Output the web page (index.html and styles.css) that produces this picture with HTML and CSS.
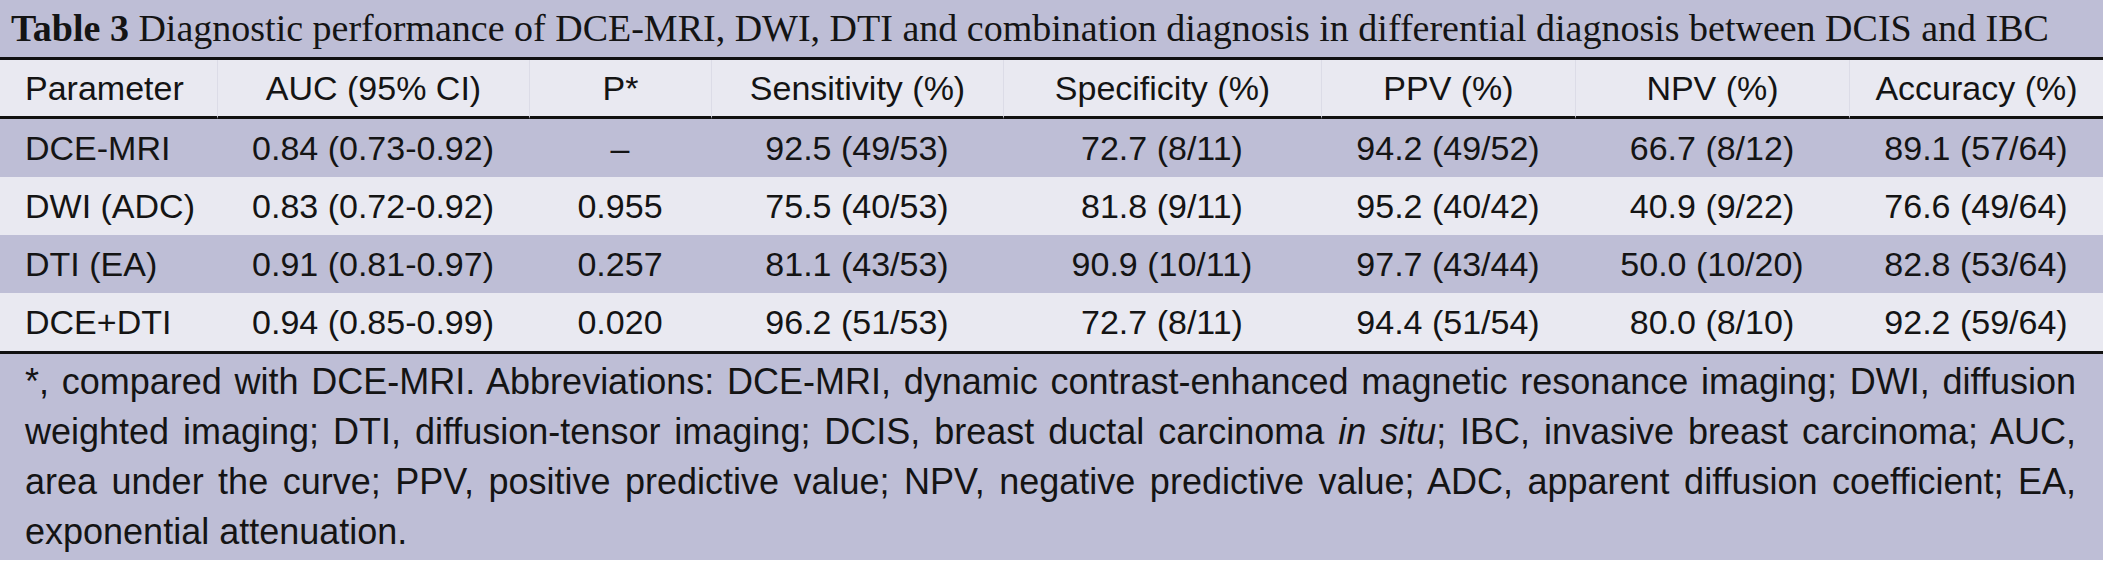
FILE: index.html
```html
<!DOCTYPE html>
<html>
<head>
<meta charset="utf-8">
<link rel="stylesheet" href="styles.css">
</head>
<body>
<div class="wrap">
  <div class="caption"><b>Table 3</b> Diagnostic performance of DCE-MRI, DWI, DTI and combination diagnosis in differential diagnosis between DCIS and IBC</div>
  <table class="tbl">
    <colgroup>
      <col class="c1"><col class="c2"><col class="c3"><col class="c4"><col class="c5"><col class="c6"><col class="c7"><col class="c8">
    </colgroup>
    <thead>
      <tr class="head">
        <th class="first">Parameter</th>
        <th>AUC (95% CI)</th>
        <th>P*</th>
        <th>Sensitivity (%)</th>
        <th>Specificity (%)</th>
        <th>PPV (%)</th>
        <th>NPV (%)</th>
        <th>Accuracy (%)</th>
      </tr>
    </thead>
    <tbody>
      <tr class="dark">
        <td class="first">DCE-MRI</td><td>0.84 (0.73-0.92)</td><td>–</td><td>92.5 (49/53)</td><td>72.7 (8/11)</td><td>94.2 (49/52)</td><td>66.7 (8/12)</td><td>89.1 (57/64)</td>
      </tr>
      <tr class="light">
        <td class="first">DWI (ADC)</td><td>0.83 (0.72-0.92)</td><td>0.955</td><td>75.5 (40/53)</td><td>81.8 (9/11)</td><td>95.2 (40/42)</td><td>40.9 (9/22)</td><td>76.6 (49/64)</td>
      </tr>
      <tr class="dark">
        <td class="first">DTI (EA)</td><td>0.91 (0.81-0.97)</td><td>0.257</td><td>81.1 (43/53)</td><td>90.9 (10/11)</td><td>97.7 (43/44)</td><td>50.0 (10/20)</td><td>82.8 (53/64)</td>
      </tr>
      <tr class="light last">
        <td class="first">DCE+DTI</td><td>0.94 (0.85-0.99)</td><td>0.020</td><td>96.2 (51/53)</td><td>72.7 (8/11)</td><td>94.4 (51/54)</td><td>80.0 (8/10)</td><td>92.2 (59/64)</td>
      </tr>
    </tbody>
  </table>
  <div class="note">*, compared with DCE-MRI. Abbreviations: DCE-MRI, dynamic contrast-enhanced magnetic resonance imaging; DWI, diffusion weighted imaging; DTI, diffusion-tensor imaging; DCIS, breast ductal carcinoma <i>in situ</i>; IBC, invasive breast carcinoma; AUC, area under the curve; PPV, positive predictive value; NPV, negative predictive value; ADC, apparent diffusion coefficient; EA, exponential attenuation.</div>
</div>
</body>
</html>
```
FILE: styles.css
```css
html, body {
  margin: 0;
  padding: 0;
  background: #ffffff;
}
.wrap {
  width: 2103px;
  color: #141414;
}
.caption {
  height: 60px;
  box-sizing: border-box;
  background: #bebed6;
  font-family: "Liberation Serif", "DejaVu Serif", serif;
  font-size: 38px;
  line-height: 57px;
  padding-left: 11px;
  white-space: nowrap;
  border-bottom: 3px solid #111;
}
.caption b {
  font-weight: bold;
}
.tbl {
  width: 2103px;
  border-collapse: separate;
  border-spacing: 0;
  table-layout: fixed;
  font-family: "Liberation Sans", Arial, sans-serif;
  font-size: 34px;
}
.c1 { width: 217px; }
.c2 { width: 312px; }
.c3 { width: 182px; }
.c4 { width: 292px; }
.c5 { width: 318px; }
.c6 { width: 254px; }
.c7 { width: 274px; }
.c8 { width: 254px; }
.tbl th, .tbl td {
  text-align: center;
  padding: 0;
  font-weight: normal;
  white-space: nowrap;
}
.tbl .first {
  text-align: left;
  padding-left: 25px;
}
.head th {
  height: 56px;
  background: #e9e9f1;
  border-bottom: 3px solid #111;
  border-left: 1px solid #dcdce7;
}
.head th.first {
  border-left: none;
}
.tbl tbody td {
  height: 58px;
}
.dark td {
  background: #bebed6;
}
.light td {
  background: #e9e9f1;
}
.last td {
  border-bottom: 3px solid #111;
}
.note {
  background: #bebed6;
  font-family: "Liberation Sans", Arial, sans-serif;
  font-size: 36px;
  line-height: 50px;
  padding: 3px 27px 4px 25px;
  text-align: justify;
  height: 206px;
  box-sizing: border-box;
}
```
